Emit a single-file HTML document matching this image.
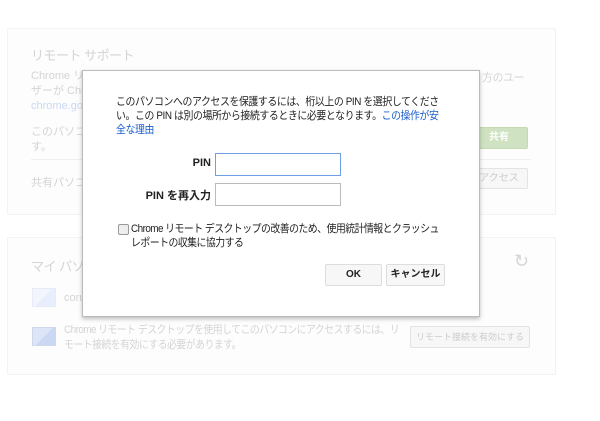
<!DOCTYPE html>
<html><head><meta charset="utf-8"><style>
body{margin:0;width:600px;height:421px;background:#fff;position:relative;overflow:hidden;font-family:"Liberation Sans","Noto Sans CJK JP",sans-serif;font-size:12px;color:#222}
.a{position:absolute;white-space:nowrap}
.sx{transform:scaleX(.9);transform-origin:0 0}
.panel{position:absolute;border:1px solid #f3f3f3;background:#fdfdfd;border-radius:2px}
.f{color:#d4d4d4}
.btn{position:absolute;border:1px solid #e3e3e3;border-radius:2px;background:#f7f7f7;font-size:10px;font-weight:bold;text-align:center;box-sizing:border-box;white-space:nowrap}
.inp{position:absolute;border:1px solid #bbb;background:#fff;box-sizing:border-box}
</style></head><body>
<div class="panel" style="left:7px;top:28px;width:547px;height:185px"></div>
<div class="panel" style="left:7px;top:237px;width:547px;height:136px"></div>
<div class="a f" style="left:31px;top:45px;font-size:13px;letter-spacing:-0.5px">リモート サポート</div>
<div class="a f" style="left:31px;top:69px;line-height:15px;font-size:11px">Chrome リモ<br>ザーが Chr<br><span style="color:#c8d8f4">chrome.goo</span></div>
<div class="a f" style="left:482px;top:69px;font-size:11px;letter-spacing:-0.5px">方のユー</div>
<div class="a f" style="left:31px;top:125px;line-height:15px;font-size:11px">このパソコン<br>す。</div>
<div class="a" style="left:31px;top:159px;width:500px;border-top:1px solid #f0f0f0"></div>
<div class="a f" style="left:31px;top:174px;font-size:11px">共有パソコン</div>
<div class="btn" style="left:470px;top:127px;width:58px;height:22px;background:#cfe3c2;border-color:#c4dab5;color:#fff;line-height:20px">共有</div>
<div class="btn" style="left:470px;top:168px;width:58px;height:21px;color:#ccc;line-height:19px;font-weight:normal">アクセス</div>
<div class="a f" style="left:31px;top:256px;font-size:13px;letter-spacing:-0.5px">マイ パソコ</div>
<div class="a f" style="left:514px;top:251px;font-size:18px">↻</div>
<div class="a" style="left:32px;top:288px;width:22px;height:17px;border:1px solid #e6ebf5;background:linear-gradient(135deg,#f2f5fc 50%,#e8eefb 50%)"></div>
<div class="a f" style="left:64px;top:292px;font-size:11px">coru</div>
<div class="a" style="left:32px;top:327px;width:22px;height:17px;border:1px solid #cfd8ea;background:linear-gradient(135deg,#dde6f8 50%,#cbd8f4 50%)"></div>
<div class="a f sx" style="left:64px;top:323px;line-height:15px;font-size:11px;letter-spacing:-0.6px">Chrome リモート デスクトップを使用してこのパソコンにアクセスするには、リ<br>モート接続を有効にする必要があります。</div>
<div class="btn" style="left:410px;top:326px;width:120px;height:22px;color:#ccc;line-height:20px;font-weight:normal;font-size:9px">リモート接続を有効にする</div>

<div class="a" style="left:82px;top:70px;width:396px;height:245px;background:#fff;border:1px solid #bbb;box-shadow:0 2px 4px rgba(0,0,0,.25)"></div>
<div class="a sx" style="left:116px;top:95px;line-height:14px;font-size:11px;letter-spacing:-0.45px">このパソコンへのアクセスを保護するには、桁以上の PIN を選択してくださ<br>い。この PIN は別の場所から接続するときに必要となります。<span style="color:#1a5fd0">この操作が安</span><br><span style="color:#1a5fd0">全な理由</span></div>
<div class="a" style="left:150px;top:157px;width:61px;text-align:right;font-weight:bold;font-size:11px">PIN</div>
<div class="inp" style="left:215px;top:153px;width:126px;height:23px;border-color:#6f9ee6"></div>
<div class="a" style="left:120px;top:187px;width:91px;text-align:right;font-weight:bold;font-size:11px">PIN を再入力</div>
<div class="inp" style="left:215px;top:183px;width:126px;height:23px"></div>
<div class="a" style="left:118px;top:224px;width:9px;height:9px;border:1px solid #999;border-radius:2px;background:#eee"></div>
<div class="a sx" style="left:131px;top:222px;line-height:14px;font-size:11px;letter-spacing:-0.6px">Chrome リモート デスクトップの改善のため、使用統計情報とクラッシュ<br>レポートの収集に協力する</div>
<div class="btn" style="left:325px;top:264px;width:57px;height:22px;line-height:20px;border-color:#ddd">OK</div>
<div class="btn" style="left:386px;top:264px;width:59px;height:22px;line-height:20px;border-color:#ddd">キャンセル</div>
</body></html>
